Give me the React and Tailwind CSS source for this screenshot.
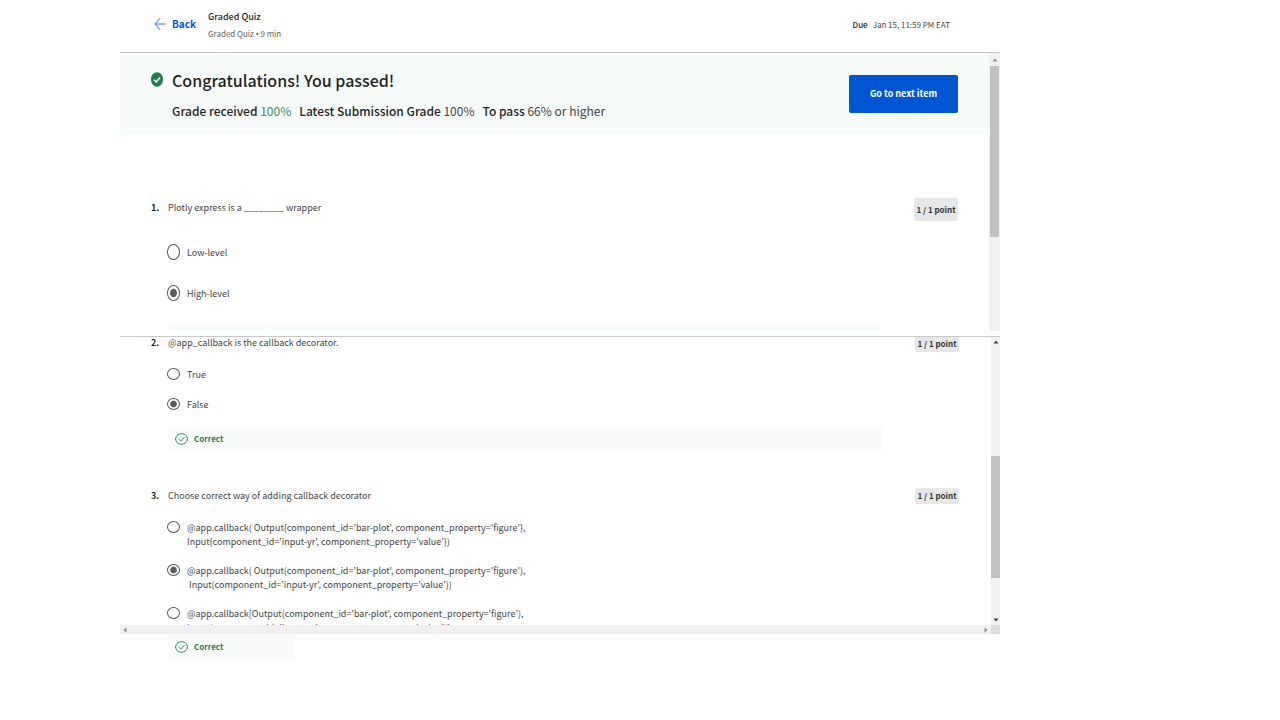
import { useState } from "react";

function BackArrow() {
  return (
    <svg className="h-[14px] w-3 shrink-0" viewBox="0 0 12 14" fill="none" stroke="#2a73ff" aria-hidden="true">
      <path d="M11.5 7H1M6.2 1L0.9 7l5.3 6" />
    </svg>
  );
}

function PassedIcon() {
  return (
    <svg className="h-[15px] w-3 shrink-0" viewBox="0 0 12 15" preserveAspectRatio="none" aria-hidden="true">
      <ellipse cx="6" cy="7.5" rx="6" ry="7.3" fill="#1d7c50" />
      <path d="M3 7.8l2.2 2.2L9 5.4" fill="none" stroke="#fff" strokeWidth="1.6" />
    </svg>
  );
}

function CorrectIcon() {
  return (
    <svg className="h-3 w-[13px] shrink-0" viewBox="0 0 13 12" fill="none" stroke="#2f8f63" aria-hidden="true">
      <ellipse cx="6.5" cy="6" rx="5.9" ry="5.3" />
      <path d="M3.7 6.2l2 1.8 3.8-3.8" />
    </svg>
  );
}

function Triangle({ className, points }) {
  return (
    <svg className={className} viewBox="0 0 6 6" aria-hidden="true">
      <polygon points={points} fill="currentColor" />
    </svg>
  );
}

const UP = "0.5,4.5 3,1.5 5.5,4.5";
const DOWN = "0.5,1.5 3,4.5 5.5,1.5";
const LEFT = "4.5,0.5 1.5,3 4.5,5.5";
const RIGHT = "1.5,0.5 4.5,3 1.5,5.5";

function Points({ tall }) {
  return (
    <span
      className={
        tall
          ? "flex h-[23px] w-11 items-center justify-center self-start rounded-[3px] bg-[#e5e7e8] text-[8px] leading-4 font-bold text-[#333]"
          : "flex h-4 w-11 items-center justify-center self-start rounded-[2px] bg-[#e5e7e8] text-[8px] leading-4 font-bold text-[#333]"
      }
    >
      1 / 1 point
    </span>
  );
}

function Option({ name, tall, checked, onChange, children }) {
  return (
    <label className={tall ? "flex gap-[7px] text-[9px] leading-[18px]" : "flex gap-[7px] text-[9px] leading-[14px]"}>
      <input
        type="radio"
        name={name}
        checked={checked}
        onChange={onChange}
        className={
          tall
            ? "h-4 w-[13px] shrink-0 appearance-none rounded-[50%] border border-[#555] checked:bg-[radial-gradient(ellipse_4px_5px,#5c5c5c_75%,transparent_95%)]"
            : "h-3 w-[13px] shrink-0 appearance-none rounded-[50%] border border-[#555] checked:bg-[radial-gradient(ellipse_4px_4px,#5c5c5c_70%,transparent_95%)]"
        }
      />
      <span className="whitespace-pre">{children}</span>
    </label>
  );
}

function Options({ name, tall, options, initial, className }) {
  const [value, setValue] = useState(initial);
  return (
    <div role="radiogroup" aria-label={name} className={className}>
      {options.map((text, i) => (
        <Option key={text} name={name} tall={tall} checked={value === i} onChange={() => setValue(i)}>
          {text}
        </Option>
      ))}
    </div>
  );
}

function Correct({ className }) {
  return (
    <div className={className}>
      <CorrectIcon />
      <span className="text-[8px] leading-4 font-bold text-[#1d7c50]">Correct</span>
    </div>
  );
}

const CODE_OPTIONS = [
  "@app.callback( Output{component_id='bar-plot', component_property='figure'},\nInput{component_id='input-yr', component_property='value'})",
  "@app.callback( Output(component_id='bar-plot', component_property='figure'),\n Input(component_id='input-yr', component_property='value'))",
  "@app.callback[Output(component_id='bar-plot', component_property='figure'),\nInput(component_id='input-yr', component_property='value')]",
];

export default function App() {
  return (
    <div className="min-h-screen bg-white pr-[280px] pl-[120px] font-['Noto_Sans_CJK_SC','Noto_Sans',sans-serif] text-[#444]">
      <header className="flex h-[53px] items-start border-b border-[#c4c4c4] pr-[50px] pl-[34px]">
        <a href="#back" className="flex items-center gap-[6px] pt-4 text-[10px] leading-4 font-bold text-[#0056d2]">
          <BackArrow />
          Back
        </a>
        <div className="pt-[9px] pl-3">
          <h1 className="text-[9px] leading-4 font-medium text-[#1f1f1f]">Graded Quiz</h1>
          <p className="pt-px text-[8px] leading-4 text-[#666]">
            Graded Quiz <span className="font-['Noto_Sans',sans-serif]">•</span> 9 min
          </p>
        </div>
        <p className="ml-auto flex gap-[5px] pt-[17px] text-[8px] leading-4">
          <span className="font-medium text-[#1f1f1f]">Due</span>
          <span>Jan 15, 11:59 PM EAT</span>
        </p>
      </header>

      <section className="flex h-[278px] overflow-hidden">
        <div className="min-w-0 grow">
          <div className="flex items-start justify-between bg-[#f7fbfa] pt-3 pr-[31px] pb-[14px] pl-[31px]">
            <div className="flex gap-[9px]">
              <div className="pt-[7px]">
                <PassedIcon />
              </div>
              <div>
                <h2 className="text-[16px] leading-[30px] font-medium text-[#1f1f1f]">Congratulations! You passed!</h2>
                <p className="flex gap-2 pt-[6px] text-[12px] leading-5">
                  <span>
                    <b className="font-medium text-[#1f1f1f]">Grade received</b> <span className="text-[#2f8f63]">100%</span>
                  </span>
                  <span>
                    <b className="font-medium text-[#1f1f1f]">Latest Submission Grade</b> 100%
                  </span>
                  <span>
                    <b className="font-medium text-[#1f1f1f]">To pass</b> 66% or higher
                  </span>
                </p>
              </div>
            </div>
            <button
              type="button"
              className="mt-[10px] h-[38px] w-[109px] rounded-[2px] bg-[#0056d2] text-[9px] leading-4 font-bold text-white"
            >
              Go to next item
            </button>
          </div>
          <div className="flex pt-[63px] pr-[31px] pl-[31px]">
            <span className="w-4 pt-[2px] text-[9px] leading-4 font-bold text-[#1f1f1f]">1.</span>
            <div className="grow pt-[2px]">
              <p className="pl-px text-[9px] leading-4">Plotly express is a ________ wrapper</p>
              <Options
                name="Question 1"
                tall
                options={["Low-level", "High-level"]}
                initial={1}
                className="flex flex-col gap-[23px] pt-7"
              />
            </div>
            <Points tall />
          </div>
          <div className="mt-5 mr-[109px] ml-12 h-[7px] bg-[#f7fbfa]" />
        </div>
        <div className="flex w-[11px] shrink-0 flex-col items-center bg-[#f1f1f1]">
          <Triangle className="mt-1 mb-[3px] h-[6px] w-[6px] text-[#8a8a8a]" points={UP} />
          <div className="h-[171px] w-[9px] bg-[#c1c1c1]" />
        </div>
      </section>

      <section className="mt-[5px] border-t border-[#c9c9c9]">
        <div className="flex h-[288px] overflow-hidden">
          <div className="min-w-0 grow pl-[31px]">
            <div className="flex pr-8">
              <span className="w-[17px] text-[9px] leading-[11px] font-bold text-[#1f1f1f]">2.</span>
              <p className="grow text-[9px] leading-[11px]">@app_callback is the callback decorator.</p>
              <div className="-mt-px -mb-px">
                <Points />
              </div>
            </div>
            <Options
              name="Question 2"
              options={["True", "False"]}
              initial={1}
              className="flex flex-col gap-4 pt-[17px] pl-4"
            />
            <Correct className="mt-[15px] mr-[109px] ml-[17px] flex h-6 items-center gap-[6px] bg-[#f8fbfa] pl-[7px]" />
            <div className="flex pt-[37px] pr-8">
              <span className="w-[17px] text-[9px] leading-4 font-bold text-[#1f1f1f]">3.</span>
              <p className="grow text-[9px] leading-4">Choose correct way of adding callback decorator</p>
              <Points />
            </div>
            <Options
              name="Question 3"
              options={CODE_OPTIONS}
              initial={1}
              className="flex flex-col gap-[15px] pt-[17px] pl-4"
            />
          </div>
          <div className="flex w-[9px] shrink-0 flex-col items-center bg-[#f1f1f1]">
            <Triangle className="mt-[2px] h-[6px] w-[6px] text-[#444]" points={UP} />
            <div className="mt-[111px] h-[122px] w-full bg-[#c1c1c1]" />
            <Triangle className="mt-auto mb-[2px] h-[6px] w-[6px] text-[#444]" points={DOWN} />
          </div>
        </div>
        <div className="flex h-[9px] bg-[#f0f0f0]">
          <div className="flex grow items-center justify-between px-[2px]">
            <Triangle className="h-[6px] w-[6px] text-[#8a8a8a]" points={LEFT} />
            <Triangle className="h-[6px] w-[6px] text-[#8a8a8a]" points={RIGHT} />
          </div>
          <div className="w-[9px] bg-[#dcdcdc]" />
        </div>
        <Correct className="ml-12 flex h-[26px] w-[127px] items-center gap-[6px] bg-[#f8fbfa] pl-[7px]" />
      </section>
    </div>
  );
}
